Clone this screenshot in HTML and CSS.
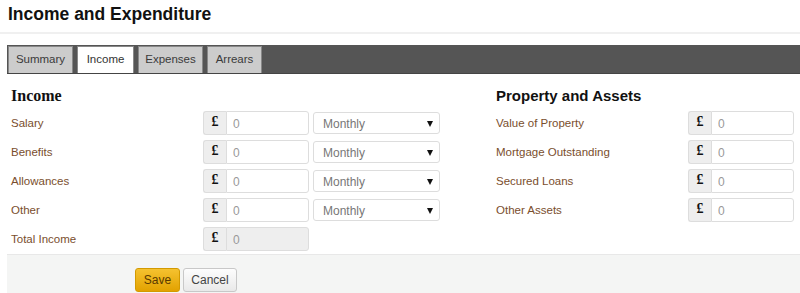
FILE: index.html
```html
<!DOCTYPE html>
<html lang="en">
<head>
  <meta charset="UTF-8" />
  <title>Income and Expenditure</title>
  <link rel="stylesheet" href="styles.css">
</head>
<body>
  <div class="page-header">
    <h1>Income and Expenditure</h1>
  </div>

  <div class="tabbar">
    <div class="tab">Summary</div>
    <div class="tab active">Income</div>
    <div class="tab">Expenses</div>
    <div class="tab">Arrears</div>
  </div>

  <div class="content">
    <div class="column">
      <h2 class="serif">Income</h2>
      <div class="row">
        <label>Salary</label>
        <div class="money"><span class="addon">£</span><input value="0"></div>
        <div class="select">Monthly<span class="caret"></span></div>
      </div>
      <div class="row">
        <label>Benefits</label>
        <div class="money"><span class="addon">£</span><input value="0"></div>
        <div class="select">Monthly<span class="caret"></span></div>
      </div>
      <div class="row">
        <label>Allowances</label>
        <div class="money"><span class="addon">£</span><input value="0"></div>
        <div class="select">Monthly<span class="caret"></span></div>
      </div>
      <div class="row">
        <label>Other</label>
        <div class="money"><span class="addon">£</span><input value="0"></div>
        <div class="select">Monthly<span class="caret"></span></div>
      </div>
      <div class="row">
        <label>Total Income</label>
        <div class="money"><span class="addon">£</span><input value="0" class="readonly" readonly></div>
      </div>
    </div>

    <div class="column right">
      <h2>Property and Assets</h2>
      <div class="row">
        <label>Value of Property</label>
        <div class="money"><span class="addon">£</span><input value="0"></div>
      </div>
      <div class="row">
        <label>Mortgage Outstanding</label>
        <div class="money"><span class="addon">£</span><input value="0"></div>
      </div>
      <div class="row">
        <label>Secured Loans</label>
        <div class="money"><span class="addon">£</span><input value="0"></div>
      </div>
      <div class="row">
        <label>Other Assets</label>
        <div class="money"><span class="addon">£</span><input value="0"></div>
      </div>
    </div>
  </div>

  <div class="footer">
    <button class="btn save">Save</button>
    <button class="btn">Cancel</button>
  </div>
</body>
</html>
```

FILE: styles.css
```css
* {
  margin: 0;
  padding: 0;
  box-sizing: border-box;
}
body {
  font-family: 'Liberation Sans', Arial, sans-serif;
  font-size: 12px;
  color: #333;
  background: #fff;
  overflow: hidden;
}
.page-header {
  height: 34px;
  padding: 3px 8px 0;
  border-bottom: 2px solid #f0f0f0;
}
h1 {
  font-size: 17.5px;
  font-weight: bold;
  color: #111;
  line-height: 22px;
}
.tabbar {
  display: flex;
  gap: 4px;
  margin: 11px 0 0 7px;
  height: 29px;
  padding: 1px 0 0 1px;
  background: #555;
  border-bottom: 1px solid #444;
}
.tab {
  width: 65px;
  height: 27px;
  line-height: 25px;
  text-align: center;
  background: #ccc;
  border: 1px solid #888;
  border-bottom: none;
  color: #3a3a3a;
  font-size: 11.5px;
}
.tab:nth-child(2) { width: 57px; }
.tab:nth-child(4) { width: 55px; }
.tab.active {
  background: #fff;
  color: #333;
}
.content {
  display: grid;
  grid-template-columns: 485px 1fr;
  padding: 13px 0 0 11px;
  height: 180px;
}
h2 {
  font-size: 15px;
  font-weight: bold;
  color: #111;
  line-height: 18px;
  margin-bottom: 3px;
}
h2.serif {
  font-family: 'Liberation Serif', 'Times New Roman', serif;
  font-size: 16px;
}
.row {
  display: flex;
  align-items: center;
  height: 29px;
}
.row label {
  width: 192px;
  font-size: 11.5px;
  color: #7a4e2d;
}
.money {
  display: flex;
  height: 24px;
}
.addon {
  width: 23px;
  background: #eee;
  border: 1px solid #ddd;
  border-right: none;
  border-radius: 3px 0 0 3px;
  font-family: 'Liberation Serif', serif;
  font-weight: bold;
  font-size: 14px;
  color: #111;
  text-align: center;
  line-height: 20px;
}
.money input {
  width: 83px;
  border: 1px solid #ddd;
  border-radius: 0 3px 3px 0;
  padding: 2px 0 0 6px;
  font-family: inherit;
  font-size: 12px;
  color: #999;
  outline: none;
  background: #fff;
}
.money input.readonly {
  background: #eee;
}
.select {
  display: flex;
  align-items: center;
  justify-content: space-between;
  width: 127px;
  height: 22px;
  margin-left: 4px;
  padding: 2px 6px 0 9px;
  border: 1px solid #ddd;
  border-radius: 3px;
  color: #777;
  background: #fff;
}
.caret {
  width: 0;
  height: 0;
  border-left: 3px solid transparent;
  border-right: 3px solid transparent;
  border-top: 6px solid #111;
}
.footer {
  margin-left: 7px;
  height: 40px;
  background: #f4f5f4;
  border-top: 1px solid #e8e8e8;
  padding: 13px 0 0 128px;
  display: flex;
  gap: 3px;
}
.btn {
  width: 54px;
  height: 24px;
  border: 1px solid #c8c8c8;
  border-radius: 3px;
  background: linear-gradient(#fdfdfd, #e9e9e9);
  font-family: inherit;
  font-size: 12px;
  color: #444;
}
.btn.save {
  width: 45px;
  background: linear-gradient(#f5c230, #e2a200);
  border-color: #d39a00;
  color: #5a3a00;
}
```
